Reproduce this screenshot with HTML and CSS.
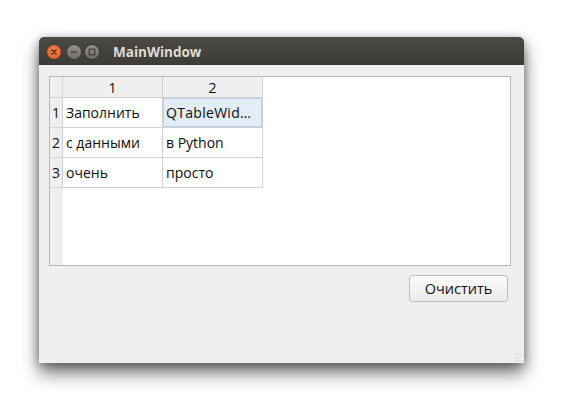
FILE: index.html
```html
<!DOCTYPE html>
<html>
<head>
<meta charset="utf-8">
<link rel="stylesheet" href="styles.css">
</head>
<body>
<div class="window">
  <div class="titlebar">
    <div class="controls">
      <span class="ctl close"><svg width="14" height="14" viewBox="0 0 14 14"><path d="M5 5L9 9M9 5L5 9" stroke="#4a1d0c" stroke-width="1.3" stroke-linecap="round"/></svg></span>
      <span class="ctl min"><svg width="14" height="14" viewBox="0 0 14 14"><path d="M4 7H10" stroke="#3c3b37" stroke-width="1.4"/></svg></span>
      <span class="ctl max"><svg width="14" height="14" viewBox="0 0 14 14"><rect x="4.2" y="4.2" width="5.6" height="5.6" fill="none" stroke="#3c3b37" stroke-width="1.2"/></svg></span>
    </div>
    <div class="title">MainWindow</div>
  </div>
  <div class="content">
    <div class="table">
      <div class="grid">
        <div class="corner"></div>
        <div class="hh">1</div>
        <div class="hh">2</div>
        <div class="vh">1</div>
        <div class="cell">Заполнить</div>
        <div class="cell sel">QTableWid…</div>
        <div class="vh">2</div>
        <div class="cell">с данными</div>
        <div class="cell">в Python</div>
        <div class="vh">3</div>
        <div class="cell">очень</div>
        <div class="cell">просто</div>
      </div>
      <div class="rest"></div>
    </div>
    <div class="actions">
      <button class="btn">Очистить</button>
    </div>
  </div>
  <div class="grip"></div>
</div>
</body>
</html>
```

FILE: styles.css
```css
html, body {
  margin: 0;
  padding: 0;
  background: #ffffff;
}
body {
  padding: 37px 0 0 39px;
  min-height: 413px;
  box-sizing: border-box;
  font-family: "Open Sans", "DejaVu Sans", sans-serif;
}
.window {
  width: 485px;
  height: 326px;
  background: #efefef;
  border-radius: 5px 5px 0 0;
  box-shadow: 0 10px 18px rgba(0,0,0,0.55), 0 2px 10px rgba(0,0,0,0.3);
  display: flex;
  flex-direction: column;
  position: relative;
}
.titlebar {
  height: 28px;
  background: linear-gradient(#4a4944, #3c3b37);
  border-radius: 5px 5px 0 0;
  display: flex;
  align-items: center;
  padding-left: 8px;
}
.controls {
  display: flex;
  align-items: center;
  margin-top: 2px;
}
.ctl {
  width: 14px;
  height: 14px;
  border-radius: 50%;
  background: linear-gradient(#94928b, #6f6d67);
  display: flex;
  align-items: center;
  justify-content: center;
  box-shadow: 0 0 0 0.5px #2f2e2a;
}
.ctl.close {
  background: radial-gradient(circle at 50% 40%, #f58552, #e0521c);
}
.ctl.min { margin-left: 6px; }
.ctl.max { margin-left: 4px; }
.title {
  margin-left: 14px;
  margin-top: 1px;
  color: #dfdbd2;
  font-weight: bold;
  font-size: 13.5px;
}
.content {
  flex: 1;
  display: flex;
  flex-direction: column;
  padding: 11px 13px 0 10px;
}
.table {
  height: 190px;
  border: 1px solid #b7b7b7;
  background: #ffffff;
  display: flex;
  flex-direction: column;
  box-sizing: border-box;
}
.grid {
  display: grid;
  grid-template-columns: 13px 100px 100px;
  grid-template-rows: 21px 30px 30px 30px;
  width: 213px;
}
.corner, .hh, .vh {
  background: #efefef;
  color: #111111;
  font-size: 14px;
}
.corner {
  border-right: 1px solid #dadada;
  border-bottom: 1px solid #cfcfcf;
}
.hh {
  display: flex;
  align-items: center;
  justify-content: center;
  border-right: 1px solid #d0d0d0;
  border-bottom: 1px solid #cfcfcf;
}
.vh {
  display: flex;
  align-items: center;
  justify-content: center;
  border-right: 1px solid #cfcfcf;
  border-bottom: 1px solid #d6d6d6;
}
.cell {
  display: flex;
  align-items: center;
  padding-left: 3px;
  font-size: 14px;
  color: #0e0e0e;
  border-right: 1px solid #d0d0d0;
  border-bottom: 1px solid #d0d0d0;
  white-space: nowrap;
  overflow: hidden;
}
.cell.sel {
  background: #e3edf7;
  box-shadow: inset 0 0 0 1px #c3d2e2;
  letter-spacing: 0.3px;
}
.rest {
  flex: 1;
  width: 13px;
  background: #efefef;
}
.actions {
  display: flex;
  justify-content: flex-end;
  padding-top: 9px;
  padding-right: 3px;
}
.btn {
  width: 99px;
  height: 27px;
  border: 1px solid #bdbdbd;
  border-radius: 3px;
  background: linear-gradient(#fafafa, #ececec);
  font-family: "Open Sans", "DejaVu Sans", sans-serif;
  font-size: 14.5px;
  color: #111111;
  padding: 0;
}
.grip {
  position: absolute;
  right: 2px;
  bottom: 2px;
  width: 8px;
  height: 8px;
  background-image: radial-gradient(circle, #c4c4c4 0.8px, transparent 1px);
  background-size: 3px 3px;
}
```
